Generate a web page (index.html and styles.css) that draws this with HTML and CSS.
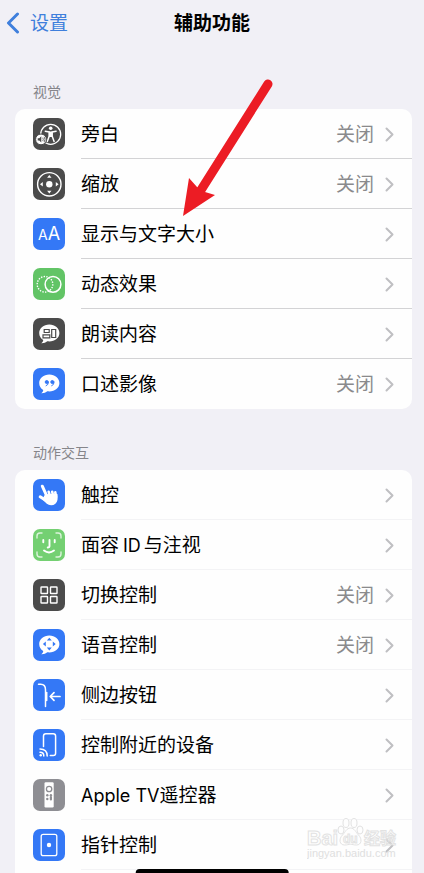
FILE: index.html
```html
<!DOCTYPE html>
<html lang="zh-CN">
<head>
    <meta charset="UTF-8">
    <meta name="viewport" content="width=device-width, initial-scale=1.0">
    <title>辅助功能</title>
    <link rel="stylesheet" href="styles.css">
</head>
<body>
    <header class="navbar">
        <a class="back" href="#">
            <svg width="14" height="22" viewBox="0 0 14 22" fill="none" stroke="currentColor" stroke-width="3" stroke-linecap="round" stroke-linejoin="round">
                <path d="M11.5 2L2.5 11l9 9"/>
            </svg>
            <span class="back-text">设置</span>
        </a>
        <h1 class="title">辅助功能</h1>
    </header>

    <!-- shared chevron and speech bubble -->
    <svg class="defs" width="0" height="0">
        <symbol id="chevron" viewBox="0 0 9 15">
            <path d="M1.5 1.5l6 6-6 6" fill="none" stroke="currentColor" stroke-width="2" stroke-linecap="round" stroke-linejoin="round"/>
        </symbol>
        <symbol id="bubble" viewBox="0 0 32 32">
            <path d="M16.3 6.500C10.600 6.500 6.200 10.200 6.200 15C6.200 18 7.700 20.400 10.200 22C10.200 23.300 9.500 24.300 8.300 25.300C10.600 25.500 12.800 24.500 14.300 23.300C20.900 24.200 26.400 20.500 26.400 15C26.400 10.200 22 6.500 16.300 6.500Z" fill="#fff"/>
        </symbol>
    </svg>

    <main class="content">
        <section class="group">
            <h2 class="group-title">视觉</h2>
            <ul class="card">
                <li><a class="row" href="#">
                    <svg class="icon dark" viewBox="0 0 32 32" fill="none">
                        <circle cx="17.700" cy="16.300" r="10" stroke="#fff" stroke-width="1.300"/>
                        <circle cx="17.700" cy="10.300" r="1.800" fill="#fff"/>
                        <path d="M12.300 13.200l4 .8v4l-2 5.500M23.100 13.200l-4 .8v4l2 5.500" stroke="#fff" stroke-width="1.500" stroke-linecap="round" stroke-linejoin="round"/>
                        <path d="M15.700 13.500h4v5.500h-4z" fill="#fff"/>
                        <circle cx="8" cy="21.400" r="5.400" fill="#fff" stroke="#4b4b4b"/>
                        <path d="M4.700 20.200h1.600l2-1.900v6.200l-2-1.900H4.700z" fill="#4b4b4b"/>
                        <path d="M9.700 19.700q1.200 1.700 0 3.400M11.100 18.800q1.800 2.600 0 5.200" stroke="#4b4b4b" stroke-width=".8"/>
                    </svg>
                    <span class="name">旁白</span>
                    <span class="value">关闭</span>
                    <svg class="chevron"><use href="#chevron"/></svg>
                </a></li>
                <li><a class="row" href="#">
                    <svg class="icon dark" viewBox="0 0 32 32" fill="none">
                        <circle cx="16.300" cy="16.300" r="11.700" stroke="#fff" stroke-width="1.400"/>
                        <circle cx="16.300" cy="16.300" r="3.200" fill="#fff"/>
                        <path d="M16.300 7l2.200 2.800h-4.400zM16.300 25.600l2.200-2.800h-4.400zM7 16.300l2.800-2.200v4.400zM25.600 16.300l-2.800-2.200v4.400z" fill="#fff"/>
                    </svg>
                    <span class="name">缩放</span>
                    <span class="value">关闭</span>
                    <svg class="chevron"><use href="#chevron"/></svg>
                </a></li>
                <li><a class="row" href="#">
                    <span class="icon blue letters" aria-hidden="true"><span class="small">A</span><span class="big">A</span></span>
                    <span class="name">显示与文字大小</span>
                    <svg class="chevron"><use href="#chevron"/></svg>
                </a></li>
                <li><a class="row" href="#">
                    <svg class="icon green" viewBox="0 0 32 32" fill="none" stroke="#fff">
                        <circle cx="12" cy="16.300" r="7.800" stroke-width="1.400" stroke-dasharray="1.400 1.300"/>
                        <circle cx="20" cy="16.300" r="7.900" stroke-width="1.500"/>
                    </svg>
                    <span class="name">动态效果</span>
                    <svg class="chevron"><use href="#chevron"/></svg>
                </a></li>
                <li><a class="row" href="#">
                    <svg class="icon dark" viewBox="0 0 32 32" fill="none">
                        <use href="#bubble"/>
                        <path d="M11.200 11.500h5v3h-5zM10 16.800h6.800v3H10zM18.700 11.500h4v8h-4z" stroke="#4b4b4b" stroke-width="1.200"/>
                    </svg>
                    <span class="name">朗读内容</span>
                    <svg class="chevron"><use href="#chevron"/></svg>
                </a></li>
                <li><a class="row" href="#">
                    <svg class="icon blue" viewBox="0 0 32 32" fill="none">
                        <use href="#bubble"/>
                        <g fill="#3478f6" stroke="#3478f6">
                            <circle cx="13.700" cy="14" r="1.500"/>
                            <circle cx="19.300" cy="14" r="1.500"/>
                            <path d="M15.500 14q.1 3-2.400 3.800M21.100 14q.1 3-2.400 3.800" fill="none" stroke-linecap="round"/>
                        </g>
                    </svg>
                    <span class="name">口述影像</span>
                    <span class="value">关闭</span>
                    <svg class="chevron"><use href="#chevron"/></svg>
                </a></li>
            </ul>
        </section>

        <section class="group">
            <h2 class="group-title">动作交互</h2>
            <ul class="card light">
                <li><a class="row" href="#">
                    <svg class="icon blue" viewBox="0 0 32 32" fill="none" stroke="#fff" stroke-linecap="round" stroke-linejoin="round">
                        <path d="M9.300 7.200l4.700 10.300" stroke-width="3"/>
                        <path d="M7.200 17.800l5.800 3.800" stroke-width="3"/>
                        <path d="M15.700 12.800l1.300 4M19.200 12.700l.9 4M22.300 13.400l.5 4" stroke-width="2.600"/>
                        <path d="M12.500 16l11.300-.5c.6 4.200-.1 6.900-1.900 8.600-2.200 1.900-5.600 1.700-7.600.1l-4-4z" fill="#fff" stroke-width="1.500"/>
                    </svg>
                    <span class="name">触控</span>
                    <svg class="chevron"><use href="#chevron"/></svg>
                </a></li>
                <li><a class="row" href="#">
                    <svg class="icon mint" viewBox="0 0 32 32" fill="none" stroke="#fff" stroke-linecap="round">
                        <path d="M4 9V7q0-3 3-3h2M23 4h2q3 0 3 3v2M28 23v2q0 3-3 3h-2M9 28H7q-3 0-3-3v-2" stroke-width="1.400" opacity=".75"/>
                        <path d="M10.300 11v2.300M21.700 11v2.300M16.500 11v6q0 1.500-1.800 1.500M11 21.600q5 3.800 10 0" stroke-width="1.900"/>
                    </svg>
                    <span class="name">面容<span class="latin spaced">ID</span>与注视</span>
                    <svg class="chevron"><use href="#chevron"/></svg>
                </a></li>
                <li><a class="row" href="#">
                    <svg class="icon dark" viewBox="0 0 32 32" fill="none" stroke="#fff" stroke-width="1.400">
                        <rect x="8" y="8" width="6.500" height="6.500" rx=".6"/>
                        <rect x="17.500" y="8" width="6.500" height="6.500" rx=".6"/>
                        <rect x="8" y="17.500" width="6.500" height="6.500" rx=".6"/>
                        <rect x="17.500" y="17.500" width="6.500" height="6.500" rx=".6"/>
                    </svg>
                    <span class="name">切换控制</span>
                    <span class="value">关闭</span>
                    <svg class="chevron"><use href="#chevron"/></svg>
                </a></li>
                <li><a class="row" href="#">
                    <svg class="icon blue" viewBox="0 0 32 32">
                        <use href="#bubble"/>
                        <path d="M16.300 8.700l2.500 2.900h-5zM16.300 21.500l2.500-2.900h-5zM9.900 15.100l2.900-2.500v5zM22.700 15.100l-2.900-2.500v5z" fill="#3478f6"/>
                    </svg>
                    <span class="name">语音控制</span>
                    <span class="value">关闭</span>
                    <svg class="chevron"><use href="#chevron"/></svg>
                </a></li>
                <li><a class="row" href="#">
                    <svg class="icon blue" viewBox="0 0 32 32" fill="none" stroke="#fff" stroke-width="1.500" stroke-linecap="round" stroke-linejoin="round">
                        <path d="M5.500 5.300h2.200q4.800 0 4.800 5.500V27.500"/>
                        <path d="M13.700 13.500v8"/>
                        <path d="M27 17.500H17.500M21 13.700l-3.800 3.800 3.800 3.800" stroke-width="1.700"/>
                    </svg>
                    <span class="name">侧边按钮</span>
                    <svg class="chevron"><use href="#chevron"/></svg>
                </a></li>
                <li><a class="row" href="#">
                    <svg class="icon blue" viewBox="0 0 32 32" fill="none" stroke="#fff" stroke-linecap="round">
                        <path d="M10.500 17.500V7q0-2.300 2.300-2.300h7.500q2.300 0 2.300 2.300v17.300q0 2.300-2.300 2.300h-3" stroke-width="1.500"/>
                        <path d="M7 23.300q3.800 0 3.800 3.700M7 20q7.200 0 7.200 7" stroke-width="1.500"/>
                        <circle cx="7.700" cy="26.300" r="1.200" fill="#fff" stroke="none"/>
                    </svg>
                    <span class="name">控制附近的设备</span>
                    <svg class="chevron"><use href="#chevron"/></svg>
                </a></li>
                <li><a class="row" href="#">
                    <svg class="icon gray" viewBox="0 0 32 32">
                        <rect x="11.500" y="3.300" width="9.200" height="25.200" rx="1.200" fill="#fff"/>
                        <circle cx="16.100" cy="10" r="2.700" fill="none" stroke="#8e8e93" stroke-width="1.300"/>
                        <g fill="#8e8e93">
                            <circle cx="14.300" cy="16.300" r="1.200"/>
                            <circle cx="17.900" cy="16.300" r="1.200"/>
                            <circle cx="14.300" cy="20" r="1.200"/>
                            <rect x="16.800" y="17" width="2.200" height="4.500" rx="1.100"/>
                        </g>
                    </svg>
                    <span class="name"><span class="latin">Apple TV</span>遥控器</span>
                    <svg class="chevron"><use href="#chevron"/></svg>
                </a></li>
                <li><a class="row" href="#">
                    <svg class="icon blue" viewBox="0 0 32 32" fill="none">
                        <rect x="8.200" y="5.300" width="15.600" height="21.400" rx="2" stroke="#fff" stroke-width="1.300"/>
                        <circle cx="16" cy="16" r="2.200" fill="#fff"/>
                    </svg>
                    <span class="name">指针控制</span>
                    <svg class="chevron"><use href="#chevron"/></svg>
                </a></li>
            </ul>
        </section>
    </main>

    <!-- pointer arrow over the list -->
    <svg class="arrow" width="92" height="140" viewBox="0 0 92 140">
        <path d="M86 7L19 113" stroke="#ec1c24" stroke-width="9" stroke-linecap="round"/>
        <path d="M1 139L7 101l8 9 8 5 10 3z" fill="#ec1c24"/>
    </svg>

    <svg class="watermark" width="96" height="46" viewBox="0 0 96 46">
        <g fill="#fff" stroke="#dcdcdc" stroke-width="1">
            <ellipse cx="34" cy="14" rx="3" ry="4"/>
            <ellipse cx="39" cy="7" rx="3" ry="4.500"/>
            <ellipse cx="47" cy="7" rx="3" ry="4.500"/>
            <ellipse cx="53" cy="14" rx="3" ry="4"/>
            <path d="M43.500 12c4 0 5 4 8 7 4 4 3 10-2 10-3 0-4-.7-6-.7s-3 .7-6 .7c-5 0-6-6-2-10 3-3 4-7 8-7z"/>
            <text x="0" y="29" class="mark">Bai</text>
            <text x="36" y="27" class="mark-du">du</text>
            <text x="57" y="28" class="mark-cn">经验</text>
        </g>
        <text x="0" y="41" class="mark-url">jingyan.baidu.com</text>
    </svg>

    <div class="home-bar"></div>
</body>
</html>
```
FILE: styles.css
```css
:root {
    --bg: #f1f0f6;
    --card: #fefefe;
    --text: #000;
    --muted: #85858a;
    --blue: #3478f6;
    --line: #d3d3d5;
}

* {
    margin: 0;
    padding: 0;
    box-sizing: border-box;
}

body {
    position: relative;
    height: 100vh;
    overflow: hidden;
    background: var(--bg);
    color: var(--text);
    font-family: Inter, "Noto Sans CJK SC", sans-serif;
    font-size: 19px;
}

a {
    color: inherit;
    text-decoration: none;
}

.defs {
    position: absolute;
}

.navbar {
    display: grid;
    grid-template-columns: 1fr auto 1fr;
    align-items: center;
    height: 46px;
    padding: 0 6px;
}

.back {
    display: flex;
    align-items: center;
    gap: 10px;
    color: #3f7fdc;
}

.title {
    font-size: 19px;
    font-weight: 700;
}

.back-text,
.title,
.name,
.value {
    padding-top: 2px;
    line-height: 28px;
}

.content {
    display: flex;
    flex-direction: column;
    gap: 34px;
    padding: 36px 12px 0 15px;
}

.group-title {
    margin-bottom: 7px;
    padding-left: 18px;
    font-size: 14px;
    font-weight: 400;
    line-height: 20px;
    color: var(--muted);
}

.card {
    padding-left: 18px;
    border-radius: 10px;
    background: var(--card);
    list-style: none;
}

/* the second list runs on below the fold */
.light {
    padding-bottom: 50px;
}

.row {
    position: relative;
    display: flex;
    align-items: center;
    height: 50px;
    padding-right: 18px;
}

.row::after {
    content: "";
    position: absolute;
    left: 48px;
    right: 0;
    bottom: 0;
    height: 1px;
    background: var(--line);
}

.card:not(.light) li:last-child .row::after {
    display: none;
}

.light .row::after {
    background: #f3f3f5;
}

.icon {
    flex: none;
    width: 32px;
    height: 32px;
    margin-right: 16px;
    border-radius: 7px;
}

.dark { background: #4b4b4b; }
.blue { background: var(--blue); }
.green { background: #62c466; }
.mint { background: #74d072; }
.gray { background: #8e8e93; }

.letters {
    display: flex;
    align-items: baseline;
    justify-content: center;
    color: #fff;
    line-height: 32px;
}

.small { font-size: 14px; }
.big { font-size: 18px; }

.name {
    flex: 1;
}

.latin {
    font-size: 18px;
}

.spaced {
    margin: 0 3px 0 4px;
}

.value {
    margin-right: 11px;
    color: #8a8a8c;
}

.chevron {
    width: 9px;
    height: 15px;
    color: #bfbfc2;
}

.arrow {
    position: absolute;
    left: 182px;
    top: 77px;
}

.watermark {
    position: absolute;
    right: 21px;
    bottom: 11px;
    font-family: "Liberation Sans", "Noto Sans CJK SC", sans-serif;
    font-weight: 700;
    opacity: 0.8;
}

.mark { font-size: 20px; }
.mark-du { font-size: 12px; }
.mark-cn { font-size: 16px; }

.mark-url {
    font-size: 11px;
    font-weight: 400;
    fill: #d8d8d8;
}

.home-bar {
    position: absolute;
    left: 50%;
    bottom: 0;
    width: 36%;
    height: 4px;
    border-radius: 4px 4px 0 0;
    background: #000;
    transform: translateX(-50%);
}
```
